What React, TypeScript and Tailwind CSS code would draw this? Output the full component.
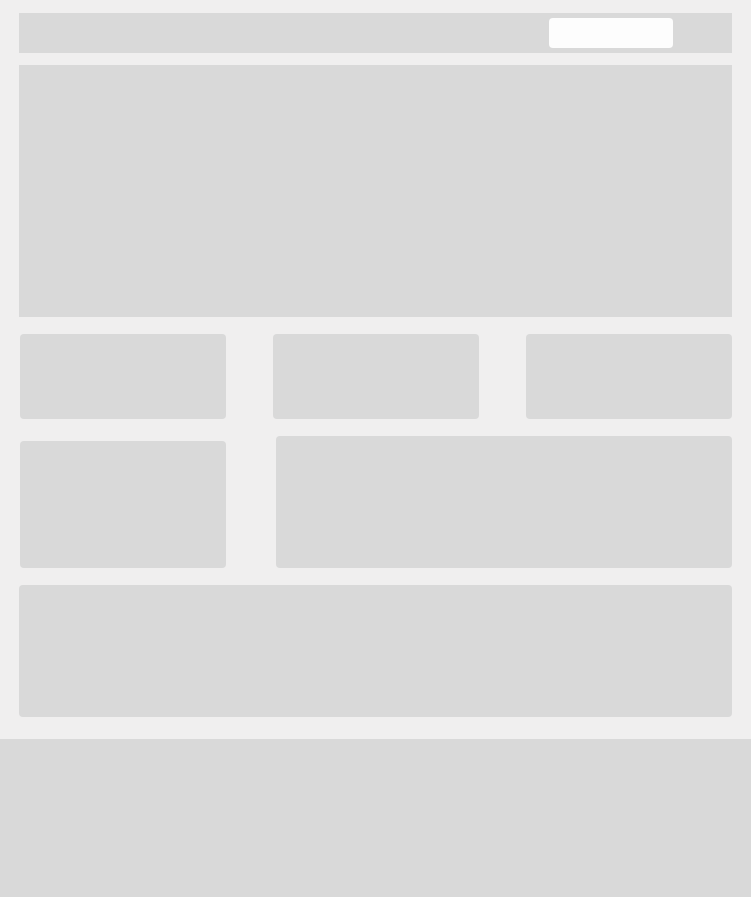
export default function App() {
  return (
    <div className="min-h-[897px] w-full bg-[#f0efef] flex flex-col">
      <main className="px-[19px] pt-[13px]">
        <header className="h-[40px] bg-[#d9d9d9] flex items-center justify-end pr-[59px]">
          <div className="w-[124px] h-[30px] rounded-[4px] bg-[#fdfdfd]" />
        </header>
        <section className="mt-[12px] h-[252px] bg-[#d9d9d9]" />
        <section className="mt-[17px] pl-px grid grid-cols-[206px_206px_206px] gap-[47px]">
          <div className="h-[85px] rounded-[4px] bg-[#d9d9d9]" />
          <div className="h-[85px] rounded-[4px] bg-[#d9d9d9]" />
          <div className="h-[85px] rounded-[4px] bg-[#d9d9d9]" />
        </section>
        <section className="mt-[17px] pl-px flex items-end gap-[50px]">
          <div className="w-[206px] h-[127px] rounded-[4px] bg-[#d9d9d9]" />
          <div className="flex-1 h-[132px] rounded-[4px] bg-[#d9d9d9]" />
        </section>
        <section className="mt-[17px] h-[132px] rounded-[4px] bg-[#d9d9d9]" />
      </main>
      <footer className="mt-[22px] h-[158px] bg-[#d9d9d9]" />
    </div>
  );
}
